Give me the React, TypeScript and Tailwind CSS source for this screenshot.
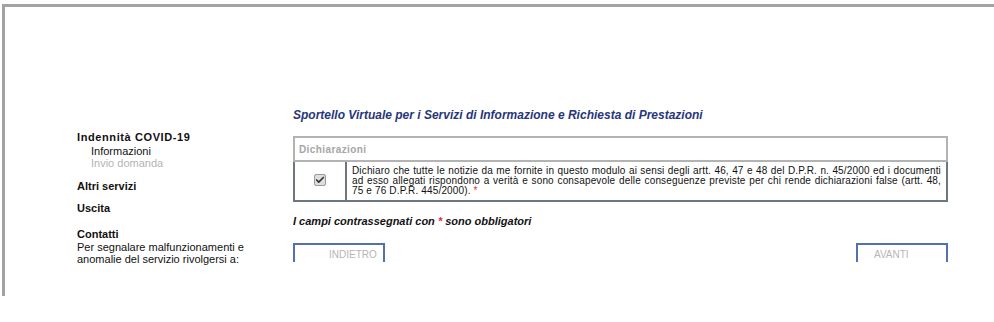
import { Check } from "lucide-react";

const Sidebar = () => {
  return (
    <aside className="w-[288px] shrink-0 pl-[72px] pt-[123px] text-[11px] leading-[12px] text-[#111]">
      <div className="font-bold leading-[14px] tracking-[0.6px]">Indennità COVID-19</div>
      <div className="pl-[14px] pt-[1px]">Informazioni</div>
      <div className="pl-[14px] text-[#b4b4b4]">Invio domanda</div>
      <div className="mt-[10px] font-bold leading-[14px]">Altri servizi</div>
      <div className="mt-[8px] font-bold leading-[14px]">Uscita</div>
      <div className="mt-[12px] font-bold leading-[14px]">Contatti</div>
      <div>Per segnalare malfunzionamenti e</div>
      <div>anomalie del servizio rivolgersi a:</div>
    </aside>
  );
};

const App = () => {
  return (
    <div className="h-[322px] w-[994px] overflow-hidden bg-white font-['Liberation_Sans',Arial,sans-serif]">
      <div className="h-[4px]" />
      <div className="ml-[2px] flex h-[292px] border-l-[3px] border-t-[3px] border-[#a3a3a3]">
        <Sidebar />
        {/* Main content */}
        <main className="w-[655px] pt-[101px]">
          <h1 className="text-[12px] font-bold italic leading-[14px] text-[#27367a]">
            Sportello Virtuale per i Servizi di Informazione e Richiesta di Prestazioni
          </h1>
          <table className="mt-[14px] w-full border-collapse text-[10px]">
            <thead>
              <tr>
                <th
                  colSpan={2}
                  className="h-[24px] border-2 border-[#b3b3b3] pl-[4px] text-left font-bold tracking-[0.4px] text-[#a6a6a6]"
                >
                  Dichiarazioni
                </th>
              </tr>
            </thead>
            <tbody>
              <tr>
                <td className="h-[40px] w-[52px] border-2 border-[#6f7682] text-center">
                  <span className="inline-flex h-[12px] w-[12px] items-center justify-center rounded-[2px] border border-[#9a9a9a] bg-[#dedede]">
                    <Check className="h-[10px] w-[10px] text-[#333]" strokeWidth={4} />
                  </span>
                </td>
                <td className="border-2 border-[#6f7682] px-[5px] py-[2px] text-justify leading-[10px] tracking-[0.15px] text-[#111]">
                  Dichiaro che tutte le notizie da me fornite in questo modulo ai sensi degli artt. 46, 47 e 48 del
                  D.P.R. n. 45/2000 ed i documenti ad esso allegati rispondono a verità e sono consapevole delle
                  conseguenze previste per chi rende dichiarazioni false (artt. 48, 75 e 76 D.P.R. 445/2000).{" "}
                  <span className="text-[#e0303a]">*</span>
                </td>
              </tr>
            </tbody>
          </table>
          <p className="mt-[12px] text-[11px] font-bold italic leading-[14px] text-[#111]">
            I campi contrassegnati con <span className="text-[#e0303a]">*</span> sono obbligatori
          </p>
          <div className="mt-[15px] flex justify-between">
            <button className="h-[19px] w-[92px] border-x-2 border-t-2 border-[#5470ae] pl-[34px] pt-[2px] text-left text-[10px] text-[#b5b5b5]">
              INDIETRO
            </button>
            <button className="h-[19px] w-[92px] border-x-2 border-t-2 border-[#5470ae] pl-[16px] pt-[2px] text-left text-[10px] text-[#b5b5b5]">
              AVANTI
            </button>
          </div>
        </main>
      </div>
    </div>
  );
};

export default App;
